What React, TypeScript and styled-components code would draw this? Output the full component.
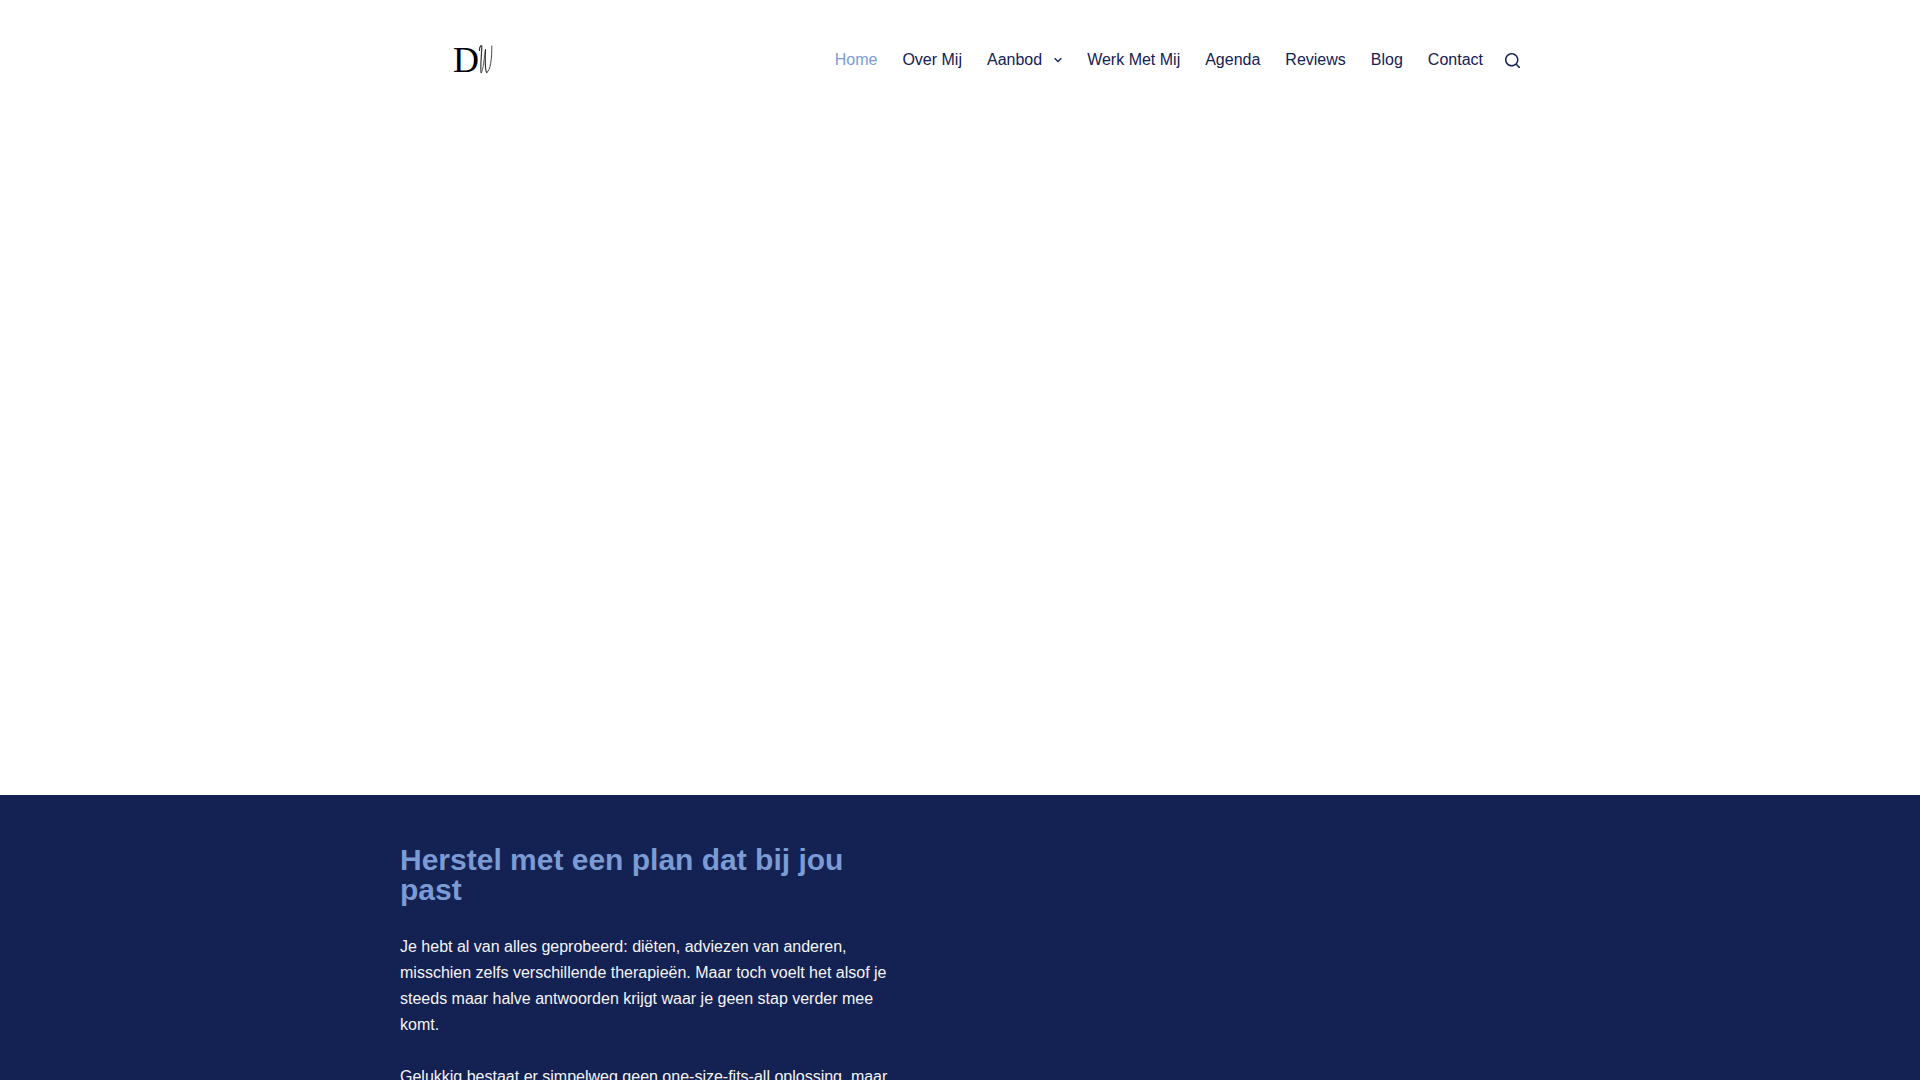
import React from "react";
import styled, { createGlobalStyle } from "styled-components";

const navy = "#132153";
const sky = "#7b9bd5";

const GlobalStyle = createGlobalStyle`
  *, *::before, *::after { box-sizing: border-box; }
  body {
    margin: 0;
    background: #fff;
    color: ${navy};
    font: 16px/26px "Liberation Sans", Arial, sans-serif;
  }
`;

const Page = styled.div`
  height: 100vh;
  overflow: hidden;
`;

const Container = styled.div`
  width: 100%;
  max-width: 1120px;
  margin: 0 auto;
`;

const Header = styled.header`
  background: #fff;
`;

const HeaderRow = styled(Container)`
  display: flex;
  align-items: center;
  justify-content: space-between;
  height: 120px;
`;

const LogoLink = styled.a`
  display: block;
  padding-left: 50px;
  color: #000;
  svg { display: block; }
`;

const Tools = styled.div`
  display: flex;
  align-items: center;
  gap: 22px;
`;

const Menu = styled.ul`
  display: flex;
  gap: 25px;
  margin: 0;
  padding: 0;
  list-style: none;
`;

const MenuLink = styled.a<{ $active?: boolean }>`
  display: flex;
  align-items: center;
  gap: 12px;
  color: ${(p) => (p.$active ? sky : navy)};
  text-decoration: none;
`;

const SearchButton = styled.button`
  display: flex;
  padding: 0;
  border: 0;
  background: none;
  color: ${navy};
  cursor: pointer;
`;

const Hero = styled.section`
  height: calc(63vh - 5px);
`;

const Plan = styled.section`
  padding: 50px 0;
  background: ${navy};
  min-height: 40vh;
`;

const Columns = styled(Container)`
  display: grid;
  grid-template-columns: 1fr 1fr;
  gap: 120px;
`;

const Title = styled.h2`
  margin: 0 0 29px;
  color: ${sky};
  font-size: 30px;
  line-height: 30px;
  font-weight: 700;
`;

const Text = styled.p`
  margin: 0 0 26px;
  color: #f5f5f5;
`;

const items = ["Home", "Over Mij", "Aanbod", "Werk Met Mij", "Agenda", "Reviews", "Blog", "Contact"];

const Logo = () => (
  <svg width="50" height="40" viewBox="0 0 50 40" role="img" aria-label="DW">
    <text x="3" y="32" fontSize="36" fontFamily="Liberation Serif, serif" fill="currentColor">D</text>
    <g fill="none" stroke="#333" strokeLinecap="round" strokeLinejoin="round">
      <path strokeWidth="1.2" d="M29.5 10.5C29 7 32 3.500 31.800 7.500C31.500 15 30 31 31.300 32.500" />
      <path strokeWidth="0.8" d="M31.300 32.500C33.500 31 34 17 35.500 9.500" />
      <path strokeWidth="1.2" d="M35.500 9.500C35 17 35 31 36.800 32.500" />
      <path strokeWidth="0.9" d="M36.800 32.500C40.500 31 42 18 41.800 6" />
    </g>
  </svg>
);

const Chevron = () => (
  <svg width="8" height="8" viewBox="0 0 8 8" fill="none" stroke="currentColor" strokeWidth="1.3" aria-hidden="true">
    <path d="M0.600 2.200 4 5.500 7.400 2.200" />
  </svg>
);

const SearchIcon = () => (
  <svg width="15" height="15" viewBox="0 0 15 15" fill="currentColor" aria-hidden="true">
    <path d="M14.8,13.7L12,11c0.9-1.2,1.5-2.6,1.5-4.2c0-3.7-3-6.8-6.8-6.8S0,3,0,6.8s3,6.8,6.8,6.8c1.6,0,3.1-0.6,4.2-1.5l2.8,2.8c0.1,0.1,0.3,0.2,0.5,0.2s0.4-0.1,0.5-0.2C15.1,14.5,15.1,14,14.8,13.7z M1.5,6.8c0-2.9,2.4-5.2,5.2-5.2S12,3.9,12,6.8S9.6,12,6.8,12S1.5,9.6,1.5,6.8z" />
  </svg>
);

export default function App() {
  return (
    <Page>
      <GlobalStyle />
      <Header>
        <HeaderRow>
          <LogoLink href="#"><Logo /></LogoLink>
          <Tools>
            <nav aria-label="Hoofdmenu">
              <Menu>
                {items.map((item, i) => (
                  <li key={item}>
                    <MenuLink href="#" $active={i === 0}>
                      {item}
                      {item === "Aanbod" && <Chevron />}
                    </MenuLink>
                  </li>
                ))}
              </Menu>
            </nav>
            <SearchButton type="button" aria-label="Zoeken"><SearchIcon /></SearchButton>
          </Tools>
        </HeaderRow>
      </Header>
      <main>
        <Hero />
        <Plan>
          <Columns>
            <div>
              <Title>Herstel met een plan dat bij jou past</Title>
              <Text>
                Je hebt al van alles geprobeerd: diëten, adviezen van anderen, misschien zelfs verschillende
                therapieën. Maar toch voelt het alsof je steeds maar halve antwoorden krijgt waar je geen stap
                verder mee komt.
              </Text>
              <Text>Gelukkig bestaat er simpelweg geen one-size-fits-all oplossing, maar</Text>
            </div>
          </Columns>
        </Plan>
      </main>
    </Page>
  );
}
